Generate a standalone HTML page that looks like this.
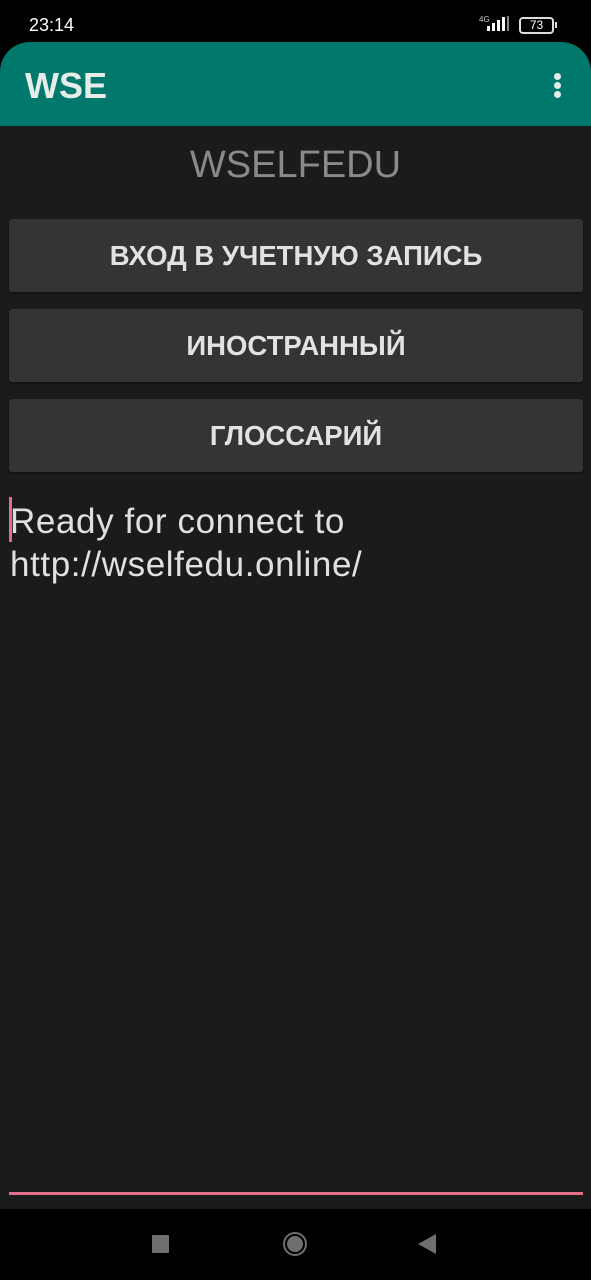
<!DOCTYPE html>
<html><head><meta charset="utf-8"><style>
*{margin:0;padding:0;box-sizing:border-box}
body{width:591px;height:1280px;background:#000;position:relative;overflow:hidden;font-family:"Liberation Sans",sans-serif}
.status{position:absolute;top:0;left:0;width:591px;height:44px;background:#000;color:#fff}
.main{position:absolute;top:42px;left:0;width:591px;height:1167px;background:#1b1b1b;border-radius:30px 30px 0 0;overflow:hidden}
.bar{height:84px;background:#00786b;position:relative}
.bar h1{position:absolute;left:25px;top:23px;font-size:36px;color:#e6ece9;font-weight:bold}
.dot{position:absolute;left:554px;width:7px;height:7px;border-radius:50%;background:#e6ece9}
.title{position:absolute;top:102px;width:591px;text-align:center;font-size:38px;color:#8a8a8a}
.btn{position:absolute;left:9px;width:574px;height:73px;background:#343434;border-radius:3px;color:#e2e2e2;font-size:27.5px;font-weight:600;text-align:center;line-height:73px;box-shadow:0 1px 2px rgba(0,0,0,.5)}
.txt{position:absolute;left:10px;top:458px;font-size:35px;letter-spacing:0.6px;line-height:43px;color:#e0e0e0}
.cursor{position:absolute;left:9px;top:455px;width:3px;height:45px;background:#e0708a}
.line{position:absolute;left:9px;top:1150px;width:574px;height:3px;background:#df7088}
</style></head><body>
<div class="status">
<div style="position:absolute;left:29px;top:15px;font-size:18px">23:14</div>
<div style="position:absolute;left:479px;top:15px;font-size:8px;color:#ccc">4G</div>
<svg style="position:absolute;left:478px;top:14px" width="36" height="20"><rect x="9" y="12" width="3" height="5" fill="#fff"/><rect x="14" y="9" width="3" height="8" fill="#fff"/><rect x="19" y="6" width="3" height="11" fill="#fff"/><rect x="24" y="3" width="3" height="14" fill="#fff"/><rect x="29" y="2" width="2" height="15" fill="#888"/></svg>
<div style="position:absolute;left:519px;top:17px;width:35px;height:17px;border:2px solid #ddd;border-radius:4px;font-size:12px;text-align:center;line-height:13px;color:#fff">73</div>
<div style="position:absolute;left:555px;top:22px;width:2px;height:6px;background:#ddd"></div>
</div>
<div class="main">
<div class="bar"><h1>WSE</h1><div class="dot" style="top:31px"></div><div class="dot" style="top:40px"></div><div class="dot" style="top:49px"></div></div>
<div class="title">WSELFEDU</div>
<div class="btn" style="top:177px">ВХОД В УЧЕТНУЮ ЗАПИСЬ</div>
<div class="btn" style="top:267px">ИНОСТРАННЫЙ</div>
<div class="btn" style="top:357px">ГЛОССАРИЙ</div>
<div class="cursor"></div>
<div class="txt">Ready for connect to<br>http://wselfedu.online/</div>
<div class="line"></div>
</div>
<svg style="position:absolute;left:0;top:1209px" width="591" height="71">
<rect x="152" y="26" width="17" height="18" fill="#6f6f6f" rx="1"/>
<circle cx="295" cy="35" r="11" fill="none" stroke="#6f6f6f" stroke-width="2"/><circle cx="295" cy="35" r="8" fill="#6f6f6f"/>
<path d="M418 35 L436 25 L436 45 Z" fill="#6f6f6f"/>
</svg>
</body></html>
